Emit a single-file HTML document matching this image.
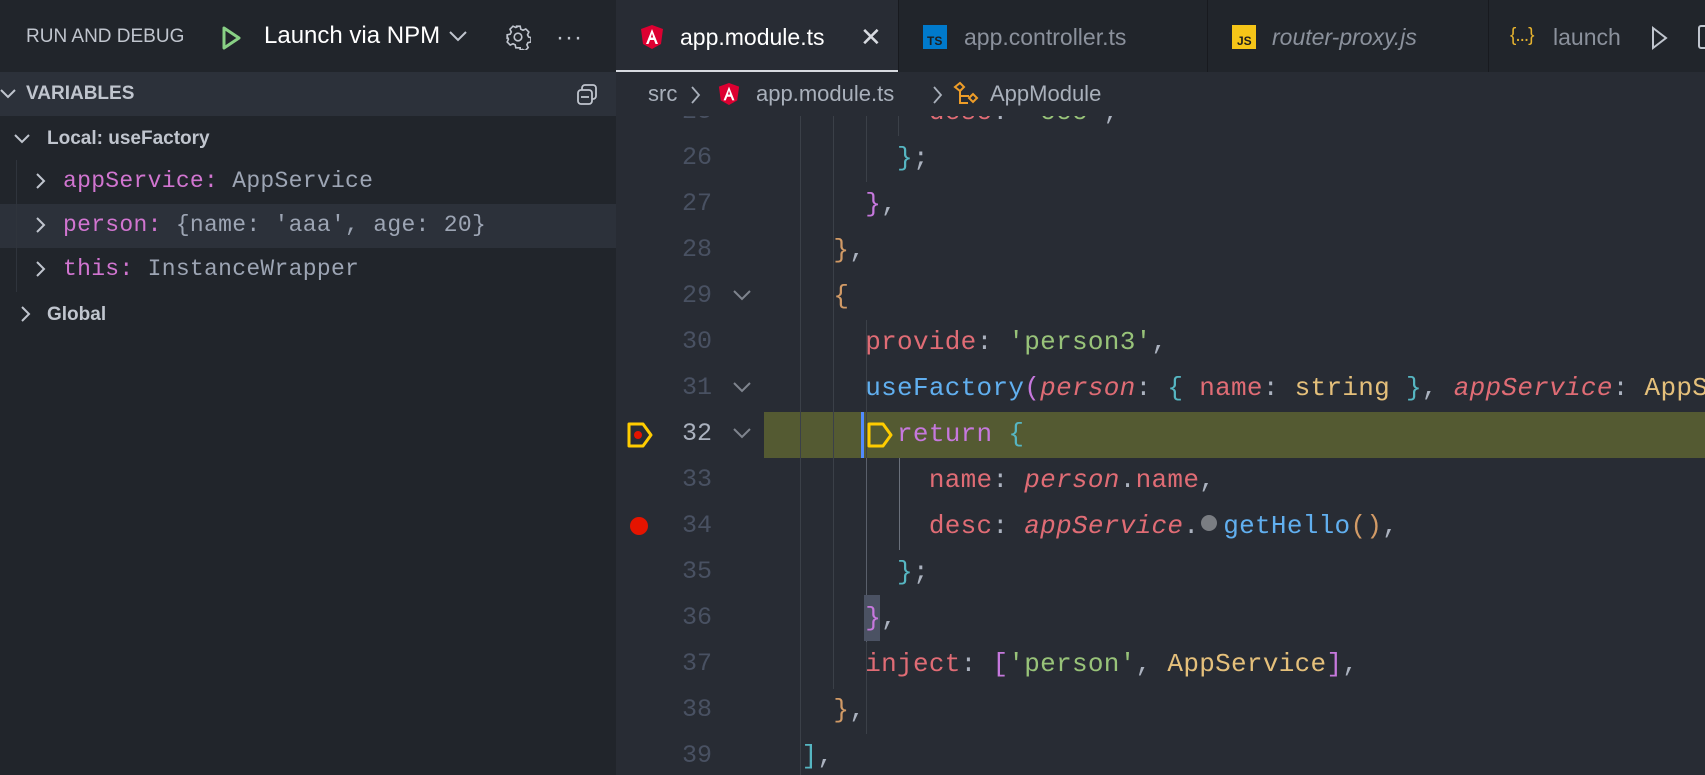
<!DOCTYPE html>
<html style="overflow:hidden"><head><meta charset="utf-8"><style>
*{margin:0;padding:0;box-sizing:border-box}
html,body{width:1705px;height:775px;overflow:hidden}
body{background:#282c34;position:relative;font-family:"Liberation Sans",sans-serif}
#wrap{position:absolute;left:0;top:0;width:1705px;height:775px;overflow:hidden}
.abs{position:absolute}
.side{left:0;top:0;width:616px;height:775px;background:#21252b}
.sans{font-family:"Liberation Sans",sans-serif}
.mono{font-family:"Liberation Mono",monospace}
.code{position:absolute;left:738px;white-space:pre;font-family:"Liberation Mono",monospace;font-size:26px;letter-spacing:0.3px;line-height:46px;color:#abb2bf}
.ln{position:absolute;width:60px;left:652px;text-align:right;font-family:"Liberation Mono",monospace;font-size:25px;line-height:46px;color:#495162}
.r{color:#e06c75}.g{color:#98c379}.y{color:#e5c07b}.o{color:#d19a66}.p{color:#c678dd}.c{color:#56b6c2}.b{color:#61afef}.i{font-style:italic}
.guide{position:absolute;width:1px;background:#3b4048}
</style></head><body><div id="wrap">
<div class="abs side"></div>
<div class="abs sans" style="left:26px;top:26px;font-size:19px;color:#c0c5ce">RUN AND DEBUG</div>
<svg class="abs" style="left:220px;top:25px" width="22" height="26"><path d="M4 3 L19 13 L4 23 Z" fill="none" stroke="#89d185" stroke-width="3" stroke-linejoin="round"/></svg>
<div class="abs sans" style="left:264px;top:22px;font-size:24px;color:#fff;width:180px;overflow:hidden;white-space:nowrap">Launch via NPM</div>
<svg class="abs" style="left:448px;top:29px" width="20" height="14"><path d="M2 3 L10 11 L18 3" fill="none" stroke="#c0c5ce" stroke-width="2"/></svg>
<svg class="abs" style="left:505px;top:24px" width="26" height="26" viewBox="0 0 24 24"><path d="M10 2h4l.6 2.8 2 1 2.6-1.2 2.8 2.8-1.2 2.6 1 2 2.2.6v4l-2.8.6-1 2 1.2 2.6-2.8 2.8-2.6-1.2-2 1L14 22h-4l-.6-2.8-2-1-2.6 1.2-2.8-2.8 1.2-2.6-1-2L2 14v-4l2.8-.6 1-2-1.2-2.6 2.8-2.8 2.6 1.2 2-1z" fill="none" stroke="#c0c5ce" stroke-width="1.5"/><circle cx="12" cy="12" r="3.5" fill="none" stroke="#c0c5ce" stroke-width="1.5"/></svg>
<div class="abs" style="left:556px;top:24px;font-size:24px;color:#c0c5ce;letter-spacing:1px">···</div>
<div class="abs" style="left:0;top:72px;width:616px;height:44px;background:#2c313a"></div>
<svg class="abs" style="left:0;top:87px" width="18" height="14"><path d="M1 3 L8 10 L15 3" fill="none" stroke="#c0c5ce" stroke-width="2"/></svg>
<div class="abs sans" style="left:26px;top:83px;font-size:19px;font-weight:bold;color:#c0c5ce">VARIABLES</div>
<svg class="abs" style="left:575px;top:82px" width="24" height="24"><rect x="7" y="3" width="14" height="14" rx="3" fill="none" stroke="#c0c5ce" stroke-width="1.8"/><rect x="3" y="8" width="14" height="14" rx="3" fill="#2c313a" stroke="#c0c5ce" stroke-width="1.8"/><path d="M6 15h8" stroke="#c0c5ce" stroke-width="1.8"/></svg>
<svg class="abs" style="left:14px;top:132px" width="18" height="14"><path d="M1 3 L8 10 L15 3" fill="none" stroke="#c0c5ce" stroke-width="2"/></svg>
<div class="abs sans" style="left:47px;top:128px;font-size:19px;font-weight:bold;color:#c0c5ce">Local: useFactory</div>
<div class="abs" style="left:0;top:204px;width:616px;height:44px;background:#2c313a"></div>
<div class="abs" style="left:16px;top:160px;width:1px;height:132px;background:#2f343c"></div>
<svg class="abs" style="left:34px;top:173px" width="14" height="18"><path d="M3 1 L10 8 L3 15" fill="none" stroke="#c0c5ce" stroke-width="2"/></svg>
<svg class="abs" style="left:34px;top:217px" width="14" height="18"><path d="M3 1 L10 8 L3 15" fill="none" stroke="#c0c5ce" stroke-width="2"/></svg>
<svg class="abs" style="left:34px;top:261px" width="14" height="18"><path d="M3 1 L10 8 L3 15" fill="none" stroke="#c0c5ce" stroke-width="2"/></svg>
<div class="abs mono" style="left:63px;top:168px;font-size:23px;letter-spacing:0.3px;color:#9da5b4;white-space:pre"><span style="color:#d175d0">appService:</span> AppService</div>
<div class="abs mono" style="left:63px;top:212px;font-size:23px;letter-spacing:0.3px;color:#9da5b4;white-space:pre"><span style="color:#d175d0">person:</span> {name: 'aaa', age: 20}</div>
<div class="abs mono" style="left:63px;top:256px;font-size:23px;letter-spacing:0.3px;color:#9da5b4;white-space:pre"><span style="color:#d175d0">this:</span> InstanceWrapper</div>
<svg class="abs" style="left:19px;top:306px" width="14" height="18"><path d="M3 1 L10 8 L3 15" fill="none" stroke="#c0c5ce" stroke-width="2"/></svg>
<div class="abs sans" style="left:47px;top:304px;font-size:19px;font-weight:bold;color:#c0c5ce">Global</div>

<div class="abs" style="left:616px;top:0;width:1089px;height:72px;background:#21252b"></div>
<div class="abs" style="left:616px;top:0;width:282px;height:72px;background:#282c34;border-bottom:2px solid #d7dae0"></div>
<div class="abs" style="left:898px;top:0;width:1px;height:72px;background:#181a1f"></div>
<div class="abs" style="left:1207px;top:0;width:1px;height:72px;background:#181a1f"></div>
<div class="abs" style="left:1488px;top:0;width:1px;height:72px;background:#181a1f"></div>
<svg class="abs" style="left:640px;top:24px" width="24" height="26" viewBox="0 0 24 26"><path d="M12 1 L23 5 L21 20 L12 25 L3 20 L1 5 Z" fill="#dd0031"/><path d="M12 5 L6 20 H8.5 L10 16 H14 L15.5 20 H18 Z M12 9.5 L13.2 13.5 H10.8 Z" fill="#fff"/></svg>
<div class="abs sans" style="left:680px;top:24px;font-size:23px;color:#fff">app.module.ts</div>
<div class="abs sans" style="left:860px;top:22px;font-size:26px;color:#d7dae0">✕</div>
<div class="abs sans" style="left:923px;top:25px;width:24px;height:24px;background:#007acc;color:#1e1e1e;font-size:12px;font-weight:bold;padding:9px 0 0 4px;line-height:14px">TS</div>
<div class="abs sans" style="left:964px;top:24px;font-size:23px;color:#8b919c">app.controller.ts</div>
<div class="abs sans" style="left:1232px;top:25px;width:24px;height:24px;background:#f5c518;color:#1e1e1e;font-size:12px;font-weight:bold;padding:9px 0 0 5px;line-height:14px">JS</div>
<div class="abs sans" style="left:1272px;top:24px;font-size:23px;color:#8b919c;font-style:italic">router-proxy.js</div>
<div class="abs sans" style="left:1510px;top:25px;font-size:19px;color:#e5b22f;letter-spacing:-1px">{...}</div>
<div class="abs sans" style="left:1553px;top:24px;font-size:23px;color:#8b919c;width:76px;overflow:hidden;white-space:nowrap">launch</div>
<svg class="abs" style="left:1650px;top:25px" width="20" height="26"><path d="M3 3 L16 13 L3 23 Z" fill="none" stroke="#c0c5ce" stroke-width="2"/></svg>
<div class="abs" style="left:1698px;top:25px;width:12px;height:24px;border:2px solid #c0c5ce;border-radius:3px"></div>

<div class="ln" style="top:89px">25</div>
<div class="code" style="top:89px">            <span class="r">desc</span>: <span class="g">'ccc'</span>,</div>
<div class="abs" style="left:616px;top:72px;width:1089px;height:44px;background:#282c34"></div>
<div class="abs sans" style="left:648px;top:81px;font-size:22px;color:#a9b0bb">src</div>
<svg class="abs" style="left:690px;top:84px" width="12" height="22"><path d="M2 3 L9 11 L2 19" fill="none" stroke="#a9b0bb" stroke-width="1.8"/></svg>
<svg class="abs" style="left:718px;top:81px" width="22" height="26" viewBox="0 0 24 26"><path d="M12 1 L23 5 L21 20 L12 25 L3 20 L1 5 Z" fill="#dd0031"/><path d="M12 5 L6 20 H8.5 L10 16 H14 L15.5 20 H18 Z M12 9.5 L13.2 13.5 H10.8 Z" fill="#fff"/></svg>
<div class="abs sans" style="left:756px;top:81px;font-size:22px;color:#a9b0bb">app.module.ts</div>
<svg class="abs" style="left:932px;top:84px" width="12" height="22"><path d="M2 3 L9 11 L2 19" fill="none" stroke="#a9b0bb" stroke-width="1.8"/></svg>
<svg class="abs" style="left:953px;top:81px" width="30" height="28"><path d="M2 6 L7 2 L11 6 L7 10 Z M7 10 V22 H15 M16 17 L20 13 L24 17 L20 21 Z M7 15 H16" fill="none" stroke="#ee9d28" stroke-width="2"/></svg>
<div class="abs sans" style="left:990px;top:81px;font-size:22px;color:#a9b0bb">AppModule</div>

<div class="abs" style="left:764px;top:412px;width:941px;height:46px;background:#545a32"></div>
<div class="abs" style="left:861px;top:412px;width:3px;height:46px;background:#528bff"></div>
<div class="guide" style="left:800px;top:116px;height:659px"></div>
<div class="guide" style="left:833px;top:116px;height:573px"></div>
<div class="guide" style="left:866px;top:116px;height:66px"></div>
<div class="guide" style="left:866px;top:320px;height:414px"></div>
<div class="guide" style="left:898px;top:116px;height:20px"></div>
<div class="guide" style="left:899px;top:458px;height:92px;background:#6a707b"></div>
<div class="guide" style="left:866px;top:458px;height:184px;background:#5a606b"></div>

<div class="ln" style="top:135px">26</div>
<div class="ln" style="top:181px">27</div>
<div class="ln" style="top:227px">28</div>
<div class="ln" style="top:273px">29</div>
<div class="ln" style="top:319px">30</div>
<div class="ln" style="top:365px">31</div>
<div class="ln" style="top:411px;color:#abb2bf">32</div>
<div class="ln" style="top:457px">33</div>
<div class="ln" style="top:503px">34</div>
<div class="ln" style="top:549px">35</div>
<div class="ln" style="top:595px">36</div>
<div class="ln" style="top:641px">37</div>
<div class="ln" style="top:687px">38</div>
<div class="ln" style="top:733px">39</div>
<svg class="abs" style="left:732px;top:288px" width="20" height="14"><path d="M2 3 L10 11 L18 3" fill="none" stroke="#7f848e" stroke-width="2"/></svg>
<svg class="abs" style="left:732px;top:380px" width="20" height="14"><path d="M2 3 L10 11 L18 3" fill="none" stroke="#7f848e" stroke-width="2"/></svg>
<svg class="abs" style="left:732px;top:426px" width="20" height="14"><path d="M2 3 L10 11 L18 3" fill="none" stroke="#7f848e" stroke-width="2"/></svg>
<svg class="abs" style="left:626px;top:420px" width="30" height="30"><path d="M3 4 H17 L25 15 L17 26 H3 Z" fill="none" stroke="#ffcc00" stroke-width="3" stroke-linejoin="round"/><circle cx="12" cy="15" r="4" fill="#e51400"/></svg>
<div class="abs" style="left:630px;top:517px;width:18px;height:18px;border-radius:50%;background:#e51400"></div>

<div class="code" style="top:135px">          <span class="c">}</span>;</div>
<div class="code" style="top:181px">        <span class="p">}</span>,</div>
<div class="code" style="top:227px">      <span class="o">}</span>,</div>
<div class="code" style="top:273px">      <span class="o">{</span></div>
<div class="code" style="top:319px">        <span class="r">provide</span>: <span class="g">'person3'</span>,</div>
<div class="code" style="top:365px">        <span class="b">useFactory</span><span class="p">(</span><span class="r i">person</span>: <span class="c">{</span> <span class="r">name</span>: <span class="y">string</span> <span class="c">}</span>, <span class="r i">appService</span>: <span class="y">AppService</span></div>
<svg class="abs" style="left:866px;top:420px" width="30" height="30"><path d="M3 4 H17 L25 15 L17 26 H3 Z" fill="none" stroke="#ffcc00" stroke-width="3" stroke-linejoin="round"/></svg>
<div class="code" style="top:411px">          <span class="p">return</span> <span class="c">{</span></div>
<div class="code" style="top:457px">            <span class="r">name</span>: <span class="r i">person</span>.<span class="r">name</span>,</div>
<div class="code" style="top:503px">            <span class="r">desc</span>: <span class="r i">appService</span>.<span style="display:inline-block;width:16px;height:16px;border-radius:50%;background:#7a7d82;margin:0 6px 0 2px;vertical-align:2px"></span><span class="b">getHello</span><span class="o">()</span>,</div>
<div class="code" style="top:549px">          <span class="c">}</span>;</div>
<div class="abs" style="left:864px;top:595px;width:16px;height:46px;background:#4b5263"></div>
<div class="code" style="top:595px">        <span class="p">}</span>,</div>
<div class="code" style="top:641px">        <span class="r">inject</span>: <span class="p">[</span><span class="g">'person'</span>, <span class="y">AppService</span><span class="p">]</span>,</div>
<div class="code" style="top:687px">      <span class="o">}</span>,</div>
<div class="code" style="top:733px">    <span class="c">]</span>,</div>
</div></body></html>
